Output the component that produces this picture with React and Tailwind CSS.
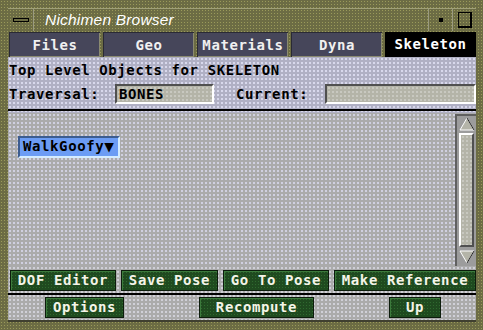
import React from "react";

const mono = { fontFamily: '"DejaVu Sans Mono", "Liberation Mono", monospace' };

const tabs = ["Files", "Geo", "Materials", "Dyna", "Skeleton"];

const Tab = ({ label, active }) => (
  <div
    className={`w-[91px] h-full flex items-center justify-center text-[14px] font-bold tracking-[0.6px] ${
      active
        ? "bg-black text-white"
        : "bg-[#46465a] text-[#f0f0f0] border-t border-l border-[#2a2a34] shadow-[inset_-1px_-1px_0_#8a8a70]"
    }`}
  >
    {label}
  </div>
);

const GreenButton = ({ label, className = "" }) => (
  <div
    className={`h-[21px] flex items-center justify-center bg-[#1f4a1f] bg-[radial-gradient(#2f6a2f_1px,transparent_1px)] bg-[size:3px_3px] border border-[#0c1c0c] shadow-[inset_1px_1px_0_#3c7a3c] text-[#f4f4e8] text-[14px] font-bold tracking-[0.6px] ${className}`}
  >
    {label}
  </div>
);

const Field = ({ value, className = "" }) => (
  <div
    className={`h-[20px] bg-[#b4b4a8] bg-[radial-gradient(#c8c8c0_1px,transparent_1px)] bg-[size:4px_4px] border-t-2 border-l-2 border-t-[#505050] border-l-[#505050] border-b-2 border-r-2 border-b-white border-r-white flex items-center px-[2px] text-[14px] font-bold tracking-[0.6px] text-black ${className}`}
  >
    {value}
  </div>
);

const App = () => {
  return (
    <div
      className="w-[483px] h-[330px] bg-[#6c6c44] bg-[radial-gradient(#9a9a5a_1px,transparent_1px)] bg-[size:3px_3px] pt-[8px] pl-[8px] pr-[7px] pb-[8px] flex flex-col overflow-hidden"
      style={mono}
    >
      {/* Title bar */}
      <div className="h-[23px] flex items-stretch border-t border-[#a0a078]">
        <div className="w-[26px] flex items-center justify-center border-r border-[#9a9a80]">
          <div className="w-[16px] h-[4px] border border-black bg-[#6c6c44]" />
        </div>
        <div
          className="flex-1 flex items-center pl-[11px] text-white italic text-[15.5px] tracking-[0.2px]"
          style={{ fontFamily: '"Liberation Sans", Arial, sans-serif' }}
        >
          Nichimen Browser
        </div>
        <div className="w-[24px] flex items-center justify-center border-l border-[#9a9a80]">
          <div className="w-[4px] h-[4px] bg-black" />
        </div>
        <div className="w-[24px] flex items-center justify-center border-l border-[#9a9a80]">
          <div className="w-[14px] h-[16px] border border-black border-r-2 border-b-2" />
        </div>
      </div>

      {/* Tabs */}
      <div className="h-[25px] mt-[1px] flex gap-[3px] pl-[1px]">
        {tabs.map((t) => (
          <Tab key={t} label={t} active={t === "Skeleton"} />
        ))}
      </div>

      {/* Content */}
      <div className="flex-1 flex flex-col bg-[#b0b0c4] bg-[radial-gradient(#d8d8ec_1px,transparent_1px)] bg-[size:4px_4px] text-black">
        <div className="h-[26px] flex items-end pl-[1px] pb-[2px] text-[14px] font-bold tracking-[0.6px]">
          Top Level Objects for SKELETON
        </div>
        <div className="h-[22px] flex items-center text-[14px] font-bold tracking-[0.6px]">
          <span className="w-[107px] pl-[1px]">Traversal:</span>
          <Field value="BONES" className="w-[99px]" />
          <span className="ml-[22px] w-[89px]">Current:</span>
          <Field value="" className="flex-1" />
        </div>
        <div className="h-[2px] mt-[4px] bg-black" />
        <div className="h-[2px]" />

        {/* List area */}
        <div className="flex-1 flex bg-[#ababab] bg-[radial-gradient(#d0d0e0_1px,transparent_1px)] bg-[size:4px_4px]">
          <div className="flex-1 pt-[21px] pl-[10px]">
            <div className="inline-flex items-center h-[22px] px-[3px] bg-[#6c9cf4] border-2 border-t-[#3c5c90] border-l-[#3c5c90] border-b-[#d4ecff] border-r-[#d4ecff] text-[14px] font-bold tracking-[0.6px]">
              WalkGoofy
              <span className="text-[16px] leading-none">▼</span>
            </div>
          </div>
          {/* Scrollbar */}
          <div className="w-[21px] flex flex-col border-l-2 border-t-2 border-[#606060] bg-[#9c9c9c] mt-[1px]">
            <div className="h-[16px] flex items-center justify-center">
              <svg width="16" height="14" viewBox="0 0 16 14">
                <polygon points="8,1 1,13 15,13" fill="#b4b4a8" stroke="#fff" strokeWidth="1" />
                <line x1="8" y1="1" x2="15" y2="13" stroke="#202020" />
              </svg>
            </div>
            <div className="flex-1 mx-[2px] my-[1px] bg-[#b4b4a8] bg-[radial-gradient(#c8c8c0_1px,transparent_1px)] bg-[size:4px_4px] border-2 border-t-white border-l-white border-b-[#505050] border-r-[#505050]" />
            <div className="h-[18px] flex items-center justify-center">
              <svg width="16" height="14" viewBox="0 0 16 14">
                <polygon points="1,1 15,1 8,13" fill="#b4b4a8" stroke="#fff" strokeWidth="1" />
                <line x1="15" y1="1" x2="8" y2="13" stroke="#202020" />
              </svg>
            </div>
          </div>
        </div>

        {/* Action buttons */}
        <div className="bg-[#ababab] bg-[radial-gradient(#d0d0d8_1px,transparent_1px)] bg-[size:4px_4px] flex flex-col">
          <div className="flex gap-[5px] pl-[2px] pt-[4px]">
            <GreenButton label="DOF Editor" className="w-[106px]" />
            <GreenButton label="Save Pose" className="w-[97px]" />
            <GreenButton label="Go To Pose" className="w-[106px]" />
            <GreenButton label="Make Reference" className="w-[142px]" />
          </div>
          <div className="h-[2px] bg-black mt-[2px]" />
          <div className="flex pt-[2px] pb-[2px]">
            <GreenButton label="Options" className="w-[79px] ml-[37px]" />
            <GreenButton label="Recompute" className="w-[115px] ml-[75px]" />
            <GreenButton label="Up" className="w-[52px] ml-[75px]" />
          </div>
          <div className="h-[2px] bg-[#404030]" />
        </div>
      </div>
    </div>
  );
};

export default App;
